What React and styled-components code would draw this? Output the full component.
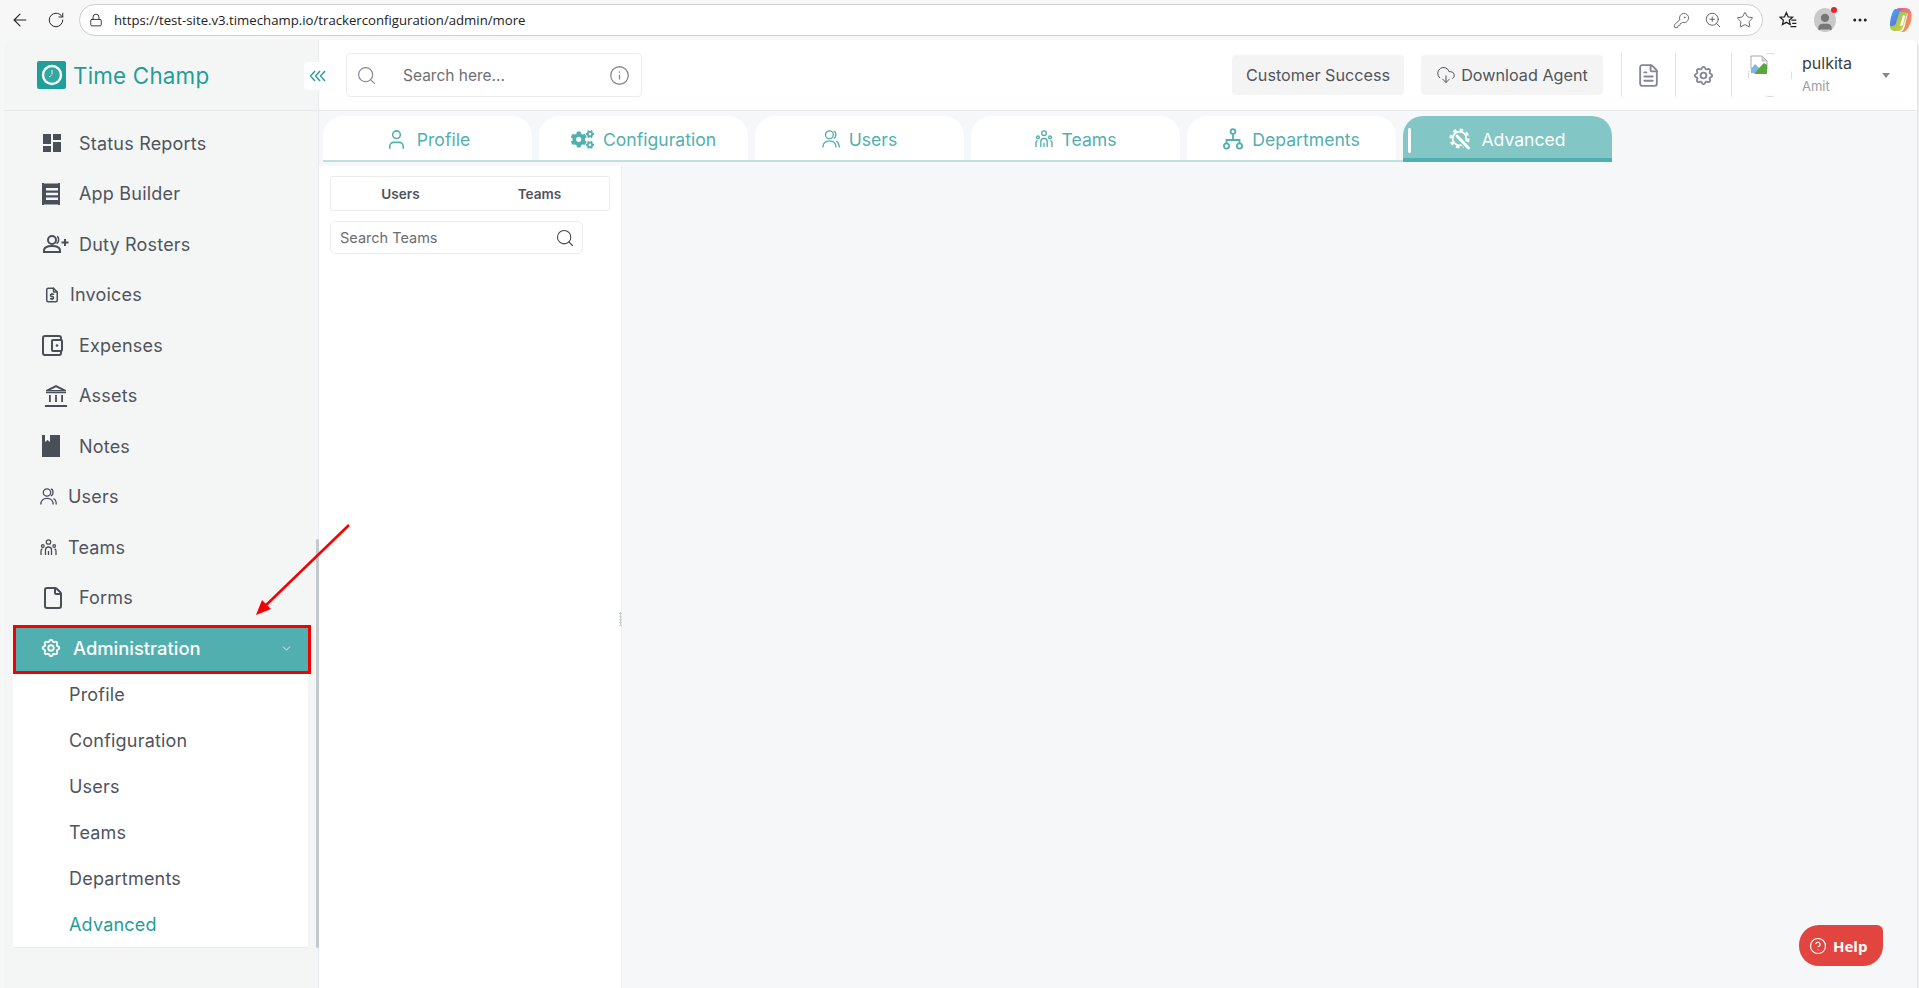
import React from 'react';
import styled, { createGlobalStyle } from 'styled-components';
import {
  ArrowLeft, RotateCw, Lock, KeyRound, ZoomIn, Star, Info, Search, CloudDownload,
  FileText, ChevronDown, CircleHelp, User, File, MoreHorizontal,
} from 'lucide-react';
import { TbSettings, TbFileDollar } from 'react-icons/tb';
import { FaCogs } from 'react-icons/fa';
import { MdDashboard } from 'react-icons/md';

const GlobalStyle = createGlobalStyle`
  html, body { margin: 0; padding: 0; height: 100%; overflow: hidden; }
  body { font-family: Inter, "Open Sans", sans-serif; background: #f7f7f7; }
  * { box-sizing: border-box; }
`;

const Page = styled.div`
  position: relative;
  width: 1919px;
  height: 988px;
  display: flex;
  flex-direction: column;
  overflow: hidden;
`;

/* browser chrome */
const BrowserBar = styled.div`
  height: 40px;
  flex: none;
  display: flex;
  align-items: center;
  color: #222;
`;

const NavButton = styled.div`
  width: ${p => p.$w || 36}px;
  flex: none;
  display: flex;
  justify-content: center;
  align-items: center;
`;

const AddressBar = styled.div`
  width: 1684px;
  height: 32px;
  margin-left: ${p => p.$ml || 0}px;
  flex: none;
  background: #fff;
  border: 1px solid #cfcfcf;
  border-radius: 16px;
  display: flex;
  align-items: center;
  padding: 0 8px 0 9px;
  gap: 11px;
`;

const Url = styled.span`
  font-family: "Open Sans", sans-serif;
  font-size: 13.2px;
  color: #222;
  flex: 1;
`;

const BarIcons = styled.div`
  display: flex;
  gap: 14px;
  align-items: center;
  color: #555;
`;

const ProfileDot = styled.div`
  position: relative;
  width: 22px;
  height: 24px;
  border-radius: 50%;
  background: #c9c9c9;
  display: flex;
  align-items: flex-end;
  justify-content: center;
  &::after {
    content: '';
    position: absolute;
    top: -1px;
    right: -1px;
    width: 6px;
    height: 6px;
    background: #e8232a;
    border-radius: 50%;
  }
`;

/* app window */
const Window = styled.div`
  flex: 1;
  min-height: 0;
  display: flex;
  margin-left: 4px;
  background: #f5f7f9;
  border-radius: 8px 8px 0 0;
  overflow: hidden;
`;

const Sidebar = styled.aside`
  position: relative;
  width: 315px;
  flex: none;
  background: #f4f6f6;
  border-right: 1px solid #e8ebee;
  display: flex;
  flex-direction: column;
`;

const Brand = styled.div`
  height: 71px;
  flex: none;
  display: flex;
  align-items: center;
  gap: 7px;
  padding: 0 0 0 33px;
  border-bottom: 1px solid #e6e9ea;
`;

const LogoBox = styled.div`
  width: 29px;
  height: 28px;
  background: #1f9e9a;
  border-radius: 2px;
  display: flex;
  align-items: center;
  justify-content: center;
`;

const BrandName = styled.span`
  font-size: 22.4px;
  font-weight: 400;
  color: #1f9e9a;
  letter-spacing: 0.2px;
`;

const CollapseBtn = styled.div`
  position: absolute;
  left: 300px;
  top: 22px;
  width: 28px;
  height: 28px;
  background: #fff;
  border-radius: 5px;
  display: flex;
  align-items: center;
  justify-content: center;
  z-index: 2;
`;

const NavList = styled.nav`
  padding-top: 7px;
  display: flex;
  flex-direction: column;
`;

const NavRow = styled.div`
  height: 50.5px;
  display: flex;
  align-items: center;
  padding-left: ${p => p.$pad || 38}px;
  font-size: 18px;
  letter-spacing: 0.2px;
  color: #50545c;
`;

const IconSlot = styled.span`
  width: ${p => p.$w}px;
  flex: none;
  display: flex;
  align-items: center;
  color: #4a4f57;
`;

const AdminRow = styled.div`
  height: 49px;
  margin: 2px 0 0 9px;
  width: 298px;
  background: #52afb0;
  border: 3px solid #f40000;
  display: flex;
  align-items: center;
  padding: 0 15px 3px 24px;
  color: #fff;
  font-size: 18.4px;
  font-weight: 500;
  gap: 11px;
`;

const AdminLabel = styled.span`
  flex: 1;
`;

const SubPanel = styled.div`
  width: 295px;
  height: 274px;
  margin-left: 9px;
  background: #fff;
  border-bottom: 1px solid #eaeced;
  overflow: hidden;
`;

const SubRow = styled.div`
  height: 46px;
  padding: 0 0 6px 56px;
  display: flex;
  align-items: center;
  font-size: 18px;
  letter-spacing: 0.2px;
  color: ${p => (p.$active ? '#1f9e9a' : '#50545c')};
`;

const Scrollbar = styled.div`
  position: absolute;
  left: 312px;
  top: 499px;
  width: 3px;
  height: 409px;
  background: #c4c8cf;
  border-radius: 2px;
`;

const Main = styled.main`
  flex: 1;
  min-width: 0;
  display: flex;
  flex-direction: column;
  border-right: 2px solid #e9e9e9;
`;

const TopBar = styled.header`
  height: 71px;
  flex: none;
  background: #fff;
  border-bottom: 1px solid #e6e9ea;
  display: flex;
  align-items: center;
  padding-left: 27px;
`;

const GlobalSearch = styled.div`
  width: 296px;
  height: 44px;
  border: 1px solid #ececec;
  border-radius: 4px;
  display: flex;
  align-items: center;
  padding: 0 11px 0 9px;
  color: #8a8b98;
`;

const GlobalSearchText = styled.span`
  flex: 1;
  margin-left: 26px;
  font-size: 15.5px;
  color: #6d6f75;
`;

const TopActions = styled.div`
  margin-left: auto;
  display: flex;
  align-items: center;
  height: 44px;
`;

const GreyButton = styled.div`
  height: 40px;
  width: ${p => p.$w}px;
  margin-right: ${p => p.$mr || 0}px;
  background: #f4f4f4;
  border-radius: 4px;
  display: flex;
  align-items: center;
  justify-content: center;
  gap: 5px;
  font-size: 16.2px;
  color: #50545c;
  padding-bottom: 1px;
`;

const IconCell = styled.div`
  height: 44px;
  width: ${p => p.$w}px;
  border-left: 1px solid #e4e4e4;
  display: flex;
  align-items: center;
  justify-content: center;
  color: #85869a;
`;

const UserCell = styled.div`
  height: 44px;
  width: 186px;
  border-left: 1px solid #e4e4e4;
  display: flex;
  align-items: center;
  padding-left: 16px;
`;

const UserText = styled.div`
  margin-left: 10px;
  margin-top: -4px;
  display: flex;
  flex-direction: column;
  gap: 5px;
`;

const UserName = styled.span`
  font-size: 16px;
  color: #3c4048;
`;

const UserRole = styled.span`
  font-size: 13px;
  color: #9a9ca3;
`;

const Caret = styled.span`
  margin: 0 0 0 auto;
  position: relative;
  left: -27px;
  width: 0;
  height: 0;
  border-left: 4px solid transparent;
  border-right: 4px solid transparent;
  border-top: 5px solid #85869a;
`;

const TabRow = styled.div`
  margin: 5px 0 0 4px;
  display: inline-flex;
  align-self: flex-start;
  gap: 7px;
  border-bottom: 2px solid #bfe0e0;
  height: 46px;
`;

const Tab = styled.div`
  position: relative;
  width: 209px;
  height: ${p => (p.$active ? 46 : 44)}px;
  background: ${p => (p.$active ? '#82c6c5' : '#fff')};
  border-bottom: ${p => (p.$active ? '4px solid #52afb0' : 'none')};
  padding-top: ${p => (p.$active ? 4 : 2)}px;
  border-radius: 20px 20px 0 0;
  display: flex;
  align-items: center;
  justify-content: center;
  gap: 9px;
  font-size: 17.6px;
  color: ${p => (p.$active ? '#fff' : '#52afb0')};
`;

const ActiveBar = styled.span`
  position: absolute;
  left: 5px;
  top: 12px;
  width: 3px;
  height: 25px;
  background: #fff;
  border-radius: 2px;
`;

const Content = styled.section`
  flex: 1;
  min-height: 0;
  margin-top: 4px;
  display: flex;
`;

const ListPanel = styled.div`
  position: relative;
  width: 303px;
  background: #fff;
  border-right: 1px solid #eceef0;
  padding: 10px 0 0 11px;
`;

const Segments = styled.div`
  width: 280px;
  height: 35px;
  display: grid;
  grid-template-columns: 1fr 1fr;
  border: 1px solid #ececec;
  border-radius: 2px;
`;

const Segment = styled.div`
  display: flex;
  align-items: center;
  justify-content: center;
  font-size: 13.6px;
  font-weight: 600;
  color: #50545c;
`;

const TeamSearch = styled.div`
  width: 253px;
  height: 33px;
  margin-top: 10px;
  border: 1px solid #ececec;
  border-radius: 5px;
  display: flex;
  align-items: center;
  justify-content: space-between;
  padding: 0 7px 0 9px;
  font-size: 14.5px;
  color: #6a6c72;
`;

const DragDots = styled.div`
  position: absolute;
  right: -1px;
  top: 446px;
  width: 3px;
  height: 14px;
  background: radial-gradient(circle, #cfd2d6 1px, transparent 1.2px) 0 0 / 3px 3px;
`;

const HelpButton = styled.div`
  position: absolute;
  left: 1799px;
  top: 925px;
  width: 84px;
  height: 41px;
  background: #e2453f;
  border-radius: 20px 6px 20px 20px;
  display: flex;
  align-items: center;
  padding-left: 10px;
  gap: 6px;
  font-family: "Open Sans", sans-serif;
  font-size: 15px;
  font-weight: 700;
  color: #fff;
`;

const Annotation = styled.svg`
  position: absolute;
  left: 240px;
  top: 515px;
  pointer-events: none;
`;

const FavIcon = () => (
  <svg width="20" height="20" viewBox="0 0 24 24" fill="none" stroke="#222" strokeWidth="1.5">
    <path d="M10 3l2.200 5.200 5.300.5-4 3.500 1.200 5.300L10 14.800 5.300 17.500l1.200-5.300-4-3.500 5.300-.5z" />
    <path d="M16 12h6M17 16h5M15 20h7" />
  </svg>
);

const Copilot = () => (
  <svg width="24" height="26" viewBox="0 0 24 26">
    <defs>
      <linearGradient id="cpA" x1="0" y1="0" x2="1" y2="1">
        <stop offset="0" stopColor="#3db4f0" />
        <stop offset="1" stopColor="#7a4de0" />
      </linearGradient>
      <linearGradient id="cpB" x1="0" y1="0" x2="1" y2="1">
        <stop offset="0" stopColor="#e85aa8" />
        <stop offset="1" stopColor="#f5a33c" />
      </linearGradient>
      <linearGradient id="cpC" x1="0" y1="0" x2="1" y2="1">
        <stop offset="0" stopColor="#5fce6a" />
        <stop offset="1" stopColor="#f2c83a" />
      </linearGradient>
    </defs>
    <path d="M7 2h8c2 0 3 1 3.500 3L14 20c-.6 2-2 4-5 4H6c-3 0-5-2-5-5 0-5 2-13 6-17z" fill="url(#cpC)" />
    <path d="M8 1h9c3 0 5 2 5.500 6 .5 5-1 12-5 16-1 1-2 2-4 2h-3c3 0 4-2 5-5l3-12c.5-2-1-3-3-3h-4z" fill="url(#cpB)" />
    <path d="M6 2h9c-3 0-4 1-5 4L7 16c-.5 2-2 3-4 3H1C1 12 3 4 6 2z" fill="url(#cpA)" />
    <path d="M14 8l-3 11 3-1 2-9z" fill="#fff" />
  </svg>
);

const LogoIcon = () => (
  <svg width="22" height="22" viewBox="0 0 22 22" fill="none">
    <circle cx="11" cy="11" r="9" stroke="#fff" strokeWidth="2.400" fill="#2fa9a4" />
    <path d="M11 6v5l-3 2" stroke="#e6f5f4" strokeWidth="1" />
    <circle cx="11" cy="11" r="1" fill="#e0685f" />
  </svg>
);

const TripleChevron = () => (
  <svg width="18" height="12" viewBox="0 0 18 12" fill="none" stroke="#1f9e9a" strokeWidth="1.400">
    <path d="M6 1L1.500 6 6 11M11 1L6.500 6 11 11M16 1l-4.500 5 4.500 5" />
  </svg>
);

const BillIcon = () => (
  <svg width="20" height="22" viewBox="0 0 20 22" fill="#4a4f57">
    <path d="M0 0h2l1 1 1-1 1 1 1-1 1 1 1-1 1 1 1-1 1 1 1-1 1 1 1-1 1 1 1-1h2v22h-2l-1-1-1 1-1-1-1 1-1-1-1 1-1-1-1 1-1-1-1 1-1-1-1 1-1-1-1 1H0z" />
    <path d="M4 5h12v2.500H4zM4 9.800h12v2.500H4zM4 14.500h12V17H4z" fill="#f4f6f6" />
  </svg>
);

const DutyIcon = () => (
  <svg width="26" height="18" viewBox="0 0 26 18" fill="none" stroke="#4a4f57" strokeWidth="2">
    <circle cx="9" cy="5" r="4" />
    <path d="M1 17v-1.500C1 12.500 4 11 9 11s8 1.500 8 4.500V17z" />
    <path d="M14 1.500c2 .5 2.500 6-.5 7" strokeWidth="1.500" />
    <path d="M22 4v7M18.500 7.500h7" />
  </svg>
);

const WalletIcon = () => (
  <svg width="21" height="21" viewBox="0 0 21 21" fill="none" stroke="#4a4f57" strokeWidth="2">
    <path d="M19 5V3a2 2 0 0 0-2-2H3a2 2 0 0 0-2 2v15a2 2 0 0 0 2 2h14a2 2 0 0 0 2-2v-2" />
    <rect x="10" y="5" width="10" height="11" rx="1" />
    <circle cx="15" cy="10.500" r="1.300" fill="#4a4f57" stroke="none" />
  </svg>
);

const BankIcon = () => (
  <svg width="22" height="22" viewBox="0 0 22 22" fill="#4a4f57">
    <path d="M11 0l10 5v1.500H1V5zM11 2.200L5.500 5h11z" />
    <path d="M1 7h20v1.300H1zM4 10h1.800v7H4zM10.100 10h1.800v7h-1.800zM16.200 10H18v7h-1.800zM0 20h22v2H0z" />
  </svg>
);

const NotebookIcon = () => (
  <svg width="18" height="22" viewBox="0 0 18 22">
    <path d="M0 0h18v22H0z" fill="#4a4f57" />
    <path d="M3 0h5v7L5.500 5 3 7z" fill="#f4f6f6" />
  </svg>
);

const UsersIcon = ({ color = '#4a4f57', size = 17 }) => (
  <svg width={size} height={size} viewBox="0 0 17 17" fill="none" stroke={color} strokeWidth="1.300">
    <circle cx="7" cy="4.500" r="3.700" />
    <path d="M.8 16.500c0-4 2.500-6.200 6.200-6.200s6.200 2.200 6.200 6.200" />
    <path d="M11 1c2.500.5 3 5.500 0 7M13.500 10.500c1.700 1 2.800 3 2.800 6" />
  </svg>
);

const TeamIcon = ({ color = '#4a4f57', size = 17 }) => (
  <svg width={size} height={size} viewBox="0 0 17 17" fill="none" stroke={color} strokeWidth="1.300">
    <circle cx="8.500" cy="3" r="2.200" />
    <circle cx="2.800" cy="7" r="1.300" />
    <circle cx="14.200" cy="7" r="1.300" />
    <path d="M5.500 16v-5c0-2 1-3 3-3s3 1 3 3v5M1 16v-4c0-1 .5-2 1.500-2M16 16v-4c0-1-.5-2-1.500-2M8.500 12v4" />
  </svg>
);

const DeptIcon = () => (
  <svg width="20" height="22" viewBox="0 0 20 22" fill="none" stroke="#52afb0" strokeWidth="1.800">
    <circle cx="10" cy="3.500" r="2.400" />
    <circle cx="3.500" cy="18" r="2.600" />
    <circle cx="16.500" cy="18" r="2.600" />
    <path d="M10 6v6M3.500 15v-3h13v3" />
  </svg>
);

const AdvancedIcon = () => (
  <svg width="23" height="23" viewBox="0 0 23 23" fill="none">
    <circle cx="10.500" cy="10.500" r="8.800" stroke="#fff" strokeWidth="2.600" strokeDasharray="3.500 3.400" />
    <circle cx="10.500" cy="10.500" r="6.800" stroke="#fff" strokeWidth="1.800" />
    <path d="M8.500 8.500l10.500 11" stroke="#82c6c5" strokeWidth="5.500" />
    <path d="M8 8l11.500 12" stroke="#fff" strokeWidth="3" strokeLinecap="round" />
  </svg>
);

// broken image in a round clip: only the square's sides show through the circle
const AvatarArt = () => (
  <svg width="44" height="44" viewBox="0 0 44 44">
    <circle
      cx="22" cy="22" r="21.500" fill="none" stroke="#dcdcdc"
      strokeDasharray="9 24.770" strokeDashoffset="4.500"
    />
    <path d="M3 3h11l5 5v8H3z" fill="#fff" stroke="#a9a9a9" />
    <path d="M14 3v5h5z" fill="#cfd8ea" stroke="#a9a9a9" strokeWidth=".6" />
    <path d="M3 16l4-5 4 4-4 5H3z" fill="#7fb6e8" />
    <path d="M6 21l5-6 5-5 3 2v9z" fill="#58a63d" />
  </svg>
);

const navItems = [
  { label: 'Status Reports', slot: 37, icon: <MdDashboard size={24} style={{ marginLeft: -2 }} /> },
  { label: 'App Builder', slot: 37, icon: <BillIcon /> },
  { label: 'Duty Rosters', slot: 36, pad: 39, icon: <DutyIcon /> },
  { label: 'Invoices', slot: 28, icon: <TbFileDollar size={18} style={{ marginLeft: 1 }} /> },
  { label: 'Expenses', slot: 37, icon: <WalletIcon /> },
  { label: 'Assets', slot: 34, pad: 41, icon: <BankIcon /> },
  { label: 'Notes', slot: 37, icon: <NotebookIcon /> },
  { label: 'Users', slot: 28, pad: 36, icon: <UsersIcon /> },
  { label: 'Teams', slot: 28, pad: 36, icon: <TeamIcon /> },
  { label: 'Forms', slot: 37, icon: <File size={24} strokeWidth={2} style={{ marginLeft: -1 }} /> },
];

const subItems = ['Profile', 'Configuration', 'Users', 'Teams', 'Departments', 'Advanced'];

const tabs = [
  { label: 'Profile', icon: <User size={23} strokeWidth={1.600} /> },
  { label: 'Configuration', icon: <FaCogs size={23} /> },
  { label: 'Users', icon: <UsersIcon color="#52afb0" size={18} /> },
  { label: 'Teams', icon: <TeamIcon color="#52afb0" size={18} /> },
  { label: 'Departments', icon: <DeptIcon /> },
  { label: 'Advanced', icon: <AdvancedIcon />, active: true },
];

export default function App() {
  return (
    <Page>
      <GlobalStyle />
      <BrowserBar>
        <NavButton $w={40}><ArrowLeft size={20} strokeWidth={1.300} /></NavButton>
        <NavButton $w={32}><RotateCw size={18} strokeWidth={1.300} /></NavButton>
        <AddressBar $ml={7}>
          <Lock size={14} strokeWidth={1.500} />
          <Url>https://test-site.v3.timechamp.io/trackerconfiguration/admin/more</Url>
          <BarIcons>
            <KeyRound size={17} strokeWidth={1.200} />
            <ZoomIn size={18} strokeWidth={1.200} />
            <Star size={18} strokeWidth={1.200} />
          </BarIcons>
        </AddressBar>
        <NavButton $w={50}><FavIcon /></NavButton>
        <NavButton $w={24}>
          <ProfileDot><User size={20} color="#777" fill="#777" /></ProfileDot>
        </NavButton>
        <NavButton $w={46}><MoreHorizontal size={18} /></NavButton>
        <NavButton $w={36}><Copilot /></NavButton>
      </BrowserBar>

      <Window>
        <Sidebar>
          <Brand>
            <LogoBox><LogoIcon /></LogoBox>
            <BrandName>Time Champ</BrandName>
          </Brand>
          <CollapseBtn><TripleChevron /></CollapseBtn>
          <NavList>
            {navItems.map(item => (
              <NavRow key={item.label} $pad={item.pad}>
                <IconSlot $w={item.slot}>{item.icon}</IconSlot>
                {item.label}
              </NavRow>
            ))}
            <AdminRow>
              <TbSettings size={22} />
              <AdminLabel>Administration</AdminLabel>
              <ChevronDown size={13} strokeWidth={1.500} />
            </AdminRow>
            <SubPanel>
              {subItems.map(label => (
                <SubRow key={label} $active={label === 'Advanced'}>{label}</SubRow>
              ))}
            </SubPanel>
          </NavList>
          <Scrollbar />
        </Sidebar>

        <Main>
          <TopBar>
            <GlobalSearch>
              <Search size={21} strokeWidth={1.400} />
              <GlobalSearchText>Search here...</GlobalSearchText>
              <Info size={21} strokeWidth={1.500} />
            </GlobalSearch>
            <TopActions>
              <GreyButton $w={172} $mr={17}>Customer Success</GreyButton>
              <GreyButton $w={182} $mr={18}>
                <CloudDownload size={20} strokeWidth={1.200} />
                Download Agent
              </GreyButton>
              <IconCell $w={54}><FileText size={25} strokeWidth={1.800} /></IconCell>
              <IconCell $w={56}><TbSettings size={23} /></IconCell>
              <UserCell>
                <AvatarArt />
                <UserText>
                  <UserName>pulkita</UserName>
                  <UserRole>Amit</UserRole>
                </UserText>
                <Caret />
              </UserCell>
            </TopActions>
          </TopBar>

          <TabRow>
            {tabs.map(tab => (
              <Tab key={tab.label} $active={tab.active}>
                {tab.active && <ActiveBar />}
                {tab.icon}
                {tab.label}
              </Tab>
            ))}
          </TabRow>

          <Content>
            <ListPanel>
              <Segments>
                <Segment>Users</Segment>
                <Segment>Teams</Segment>
              </Segments>
              <TeamSearch>
                Search Teams
                <Search size={20} strokeWidth={1.300} color="#444" />
              </TeamSearch>
              <DragDots />
            </ListPanel>
          </Content>
        </Main>
      </Window>

      <Annotation width="120" height="110" viewBox="0 0 120 110">
        <path d="M109 10L22 94" stroke="#f40000" strokeWidth="2.500" fill="none" />
        <path d="M16 100l6-15 9 9z" fill="#f40000" />
      </Annotation>

      <HelpButton>
        <CircleHelp size={18} strokeWidth={1.600} />
        Help
      </HelpButton>
    </Page>
  );
}
